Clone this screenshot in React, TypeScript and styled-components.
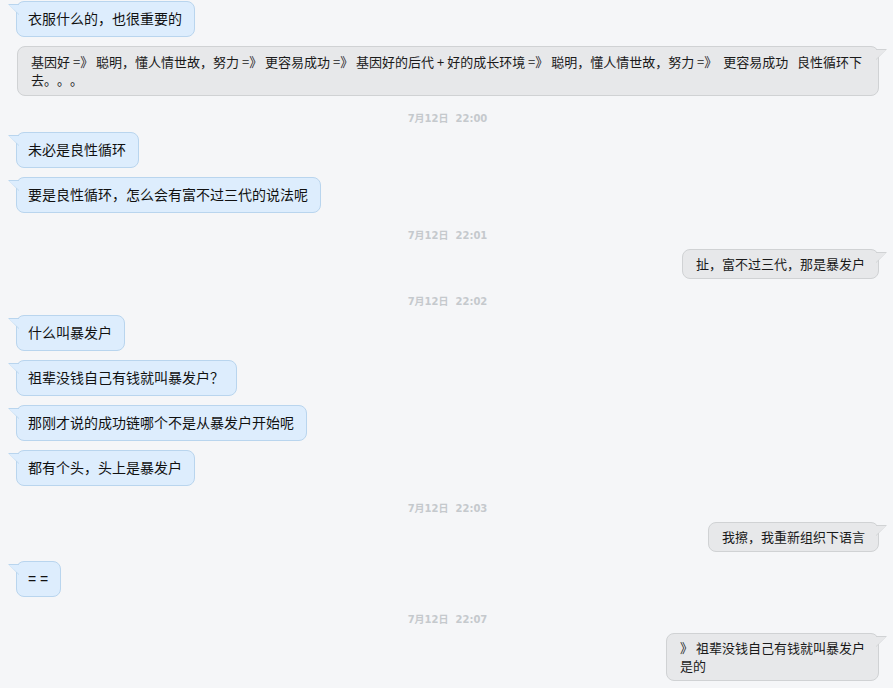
import React from "react";
import styled, { createGlobalStyle, css } from "styled-components";

const Global = createGlobalStyle`
  html, body { margin: 0; padding: 0; background: #f5f6f8; }
  body { font-family: "Noto Sans CJK SC", "Liberation Sans", sans-serif; }
`;

const Page = styled.div`
  width: 893px;
  height: 688px;
  box-sizing: border-box;
  padding: 1px 14px 0 16px;
  background: #f5f6f8;
  display: flex;
  flex-direction: column;
  overflow: hidden;
`;

const Row = styled.div<{ $mine?: boolean }>`
  display: flex;
  flex-shrink: 0;
  justify-content: ${(p) => (p.$mine ? "flex-end" : "flex-start")};
  margin-bottom: 9px;
`;

const Stamp = styled.div`
  flex-shrink: 0;
  height: 27px;
  line-height: 27px;
  text-align: center;
  font-family: "DejaVu Sans", "Noto Sans CJK SC", sans-serif;
  font-weight: bold;
  font-size: 10px;
  color: #c5c9cd;
  white-space: pre;
`;

const base = css`
  position: relative;
  box-sizing: border-box;
  border-radius: 8px;
  white-space: pre-wrap;
  text-spacing-trim: space-all;
  &::before,
  &::after {
    content: "";
    position: absolute;
  }
`;

const Theirs = styled.div`
  ${base};
  font-family: "Liberation Sans", "Noto Sans CJK SC", sans-serif;
  background: #ddedfd;
  border: 1px solid #b9d5ee;
  color: #111;
  font-size: 14px;
  line-height: 20px;
  padding: 7px 12px 7px 11px;
  &::before {
    left: -9px;
    top: 2px;
    width: 11px;
    height: 11px;
    background: #b9d5ee;
    clip-path: polygon(0 0, 100% 0, 100% 100%);
  }
  &::after {
    left: -8px;
    top: 3px;
    width: 11px;
    height: 10px;
    background: #ddedfd;
    clip-path: polygon(0 0, 100% 0, 100% 100%);
  }
`;

const Mine = styled.div<{ $wide?: boolean }>`
  ${base};
  font-family: "Noto Sans CJK SC", "Liberation Sans", sans-serif;
  background: #e7e8ea;
  border: 1px solid #d0d2d4;
  color: #1a1a1a;
  font-size: 13px;
  line-height: 18px;
  padding: ${(p) => (p.$wide ? "6px 6px 6px 13px" : "5px 13px")};
  ${(p) => p.$wide && "width: 100%; margin-left: 1px;"}
  &::before {
    right: -9px;
    top: 2px;
    width: 11px;
    height: 11px;
    background: #d0d2d4;
    clip-path: polygon(0 0, 100% 0, 0 100%);
  }
  &::after {
    right: -8px;
    top: 3px;
    width: 11px;
    height: 10px;
    background: #e7e8ea;
    clip-path: polygon(0 0, 100% 0, 0 100%);
  }
`;

type Msg =
  | { kind: "in"; text: string }
  | { kind: "out"; text: string; wide?: boolean }
  | { kind: "time"; text: string };

const messages: Msg[] = [
  { kind: "in", text: "衣服什么的，也很重要的" },
  {
    kind: "out",
    wide: true,
    text:
      "基因好 =》 聪明，懂人情世故，努力 =》 更容易成功 =》 基因好的后代 + 好的成长环境 =》 聪明，懂人情世故，努力 =》  更容易成功   良性循环下\n去。。。",
  },
  { kind: "time", text: "7月12日  22:00" },
  { kind: "in", text: "未必是良性循环" },
  { kind: "in", text: "要是良性循环，怎么会有富不过三代的说法呢" },
  { kind: "time", text: "7月12日  22:01" },
  { kind: "out", text: "扯，富不过三代，那是暴发户" },
  { kind: "time", text: "7月12日  22:02" },
  { kind: "in", text: "什么叫暴发户" },
  { kind: "in", text: "祖辈没钱自己有钱就叫暴发户？" },
  { kind: "in", text: "那刚才说的成功链哪个不是从暴发户开始呢" },
  { kind: "in", text: "都有个头，头上是暴发户" },
  { kind: "time", text: "7月12日  22:03" },
  { kind: "out", text: "我擦，我重新组织下语言" },
  { kind: "in", text: "= =" },
  { kind: "time", text: "7月12日  22:07" },
  { kind: "out", text: "》 祖辈没钱自己有钱就叫暴发户\n是的" },
];

export default function App() {
  return (
    <>
      <Global />
      <Page>
        {messages.map((m, i) => {
          if (m.kind === "time") return <Stamp key={i}>{m.text}</Stamp>;
          if (m.kind === "in")
            return (
              <Row key={i}>
                <Theirs>{m.text}</Theirs>
              </Row>
            );
          return (
            <Row key={i} $mine>
              <Mine $wide={m.wide}>{m.text}</Mine>
            </Row>
          );
        })}
      </Page>
    </>
  );
}
